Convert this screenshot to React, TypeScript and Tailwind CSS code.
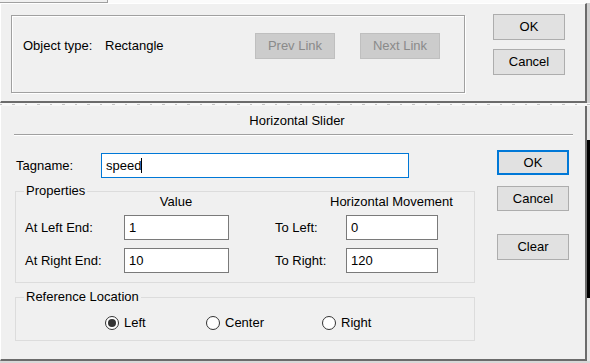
import type { ReactNode } from "react";

function Button({
  children,
  className = "",
  focused = false,
  disabled = false,
}: {
  children: ReactNode;
  className?: string;
  focused?: boolean;
  disabled?: boolean;
}) {
  return (
    <div
      className={`flex items-center justify-center ${
        disabled
          ? "bg-[#cccccc] border border-[#bfbfbf] text-[#8a8a8a]"
          : focused
          ? "bg-[#e1e1e1] border-2 border-[#0078d7] text-black"
          : "bg-[#e1e1e1] border border-[#adadad] text-black"
      } ${className}`}
    >
      {children}
    </div>
  );
}

function TextBox({ value, className = "", focused = false }: { value: string; className?: string; focused?: boolean }) {
  return (
    <div
      className={`h-[25px] bg-white border flex items-center pl-[4px] ${
        focused ? "border-[#0078d7]" : "border-[#7a7a7a]"
      } ${className}`}
    >
      <span>{value}</span>
      {focused && <span className="w-px h-[15px] bg-black" />}
    </div>
  );
}

function Radio({ label, checked = false, className = "" }: { label: string; checked?: boolean; className?: string }) {
  return (
    <div className={`flex items-center gap-[5px] ${className}`}>
      <div className="w-[14px] h-[14px] rounded-full border border-[#333333] bg-white flex items-center justify-center">
        {checked && <div className="w-[8px] h-[8px] rounded-full bg-[#333333]" />}
      </div>
      <span>{label}</span>
    </div>
  );
}

export default function App() {
  return (
    <div className="w-[590px] h-[363px] overflow-hidden bg-[#f0f0f0] text-[13px] leading-[16px] text-black font-['Liberation_Sans',Arial,sans-serif] flex flex-col">
      {/* strip above the first dialog */}
      <div className="h-[3px] flex bg-[#fbfbfb]">
        <div className="w-[108px] h-[3px] bg-[#f0f0f0] border-b border-r border-[#a0a0a0]" />
      </div>

      {/* Link dialog */}
      <div className="h-[100px] flex">
        <div className="w-[587px] h-[100px] flex border-t border-l border-white border-r-2 border-r-[#6b6b6b] border-b-2 border-b-[#6b6b6b]">
          <div className="ml-[10px] mt-[11px] w-[454px] h-[78px] border border-[#a0a0a0] shadow-[inset_1px_1px_0_#ffffff,1px_1px_0_#ffffff] pl-[11px] pt-[17px]">
            <div className="flex items-center h-[26px]">
              <span className="w-[82px]">Object type:</span>
              <span className="w-[150px]">Rectangle</span>
              <Button disabled className="w-[80px] h-[26px]">
                Prev Link
              </Button>
              <Button disabled className="ml-[25px] w-[80px] h-[26px]">
                Next Link
              </Button>
            </div>
          </div>
          <div className="ml-[28px] mt-[10px] flex flex-col gap-[9px]">
            <Button className="w-[72px] h-[26px]">OK</Button>
            <Button className="w-[72px] h-[26px]">Cancel</Button>
          </div>
        </div>
        <div className="w-[3px] bg-[#d0d0d0]" />
      </div>

      {/* gap between dialogs */}
      <div className="h-[3px] bg-[#f7f7f7] flex items-center">
        <div className="w-full h-px bg-[repeating-linear-gradient(90deg,#c4c4c4_0_2px,transparent_2px_12.5px)]" />
      </div>

      {/* Horizontal Slider dialog */}
      <div className="h-[255px] flex">
        <div className="w-[587px] h-[255px] border-l border-white border-r-2 border-r-[#6b6b6b] border-b-2 border-b-[#6b6b6b]">
          <div className="pt-[7px] text-center pl-[8px]">Horizontal Slider</div>
          <div className="ml-[13px] mt-[5px] w-[559px] h-[2px] border-t border-[#a0a0a0] border-b border-b-white" />

          <div className="flex">
            <div className="pl-[14px] w-[474px]">
              <div className="mt-[17px] flex items-center">
                <span className="pl-[1px] w-[86px]">Tagname:</span>
                <TextBox focused value="speed" className="w-[308px]" />
              </div>

              <fieldset className="mt-[5px] w-[460px] border border-[#dcdcdc] pb-[9px]">
                <legend className="ml-[8px] px-[2px]">Properties</legend>
                <div className="pl-[9px]">
                  <div className="-mt-[4px] flex leading-[14px]">
                    <span className="ml-[99px] w-[104px] text-center">Value</span>
                    <span className="ml-[102px] whitespace-nowrap">Horizontal Movement</span>
                  </div>
                  <div className="mt-[6px] flex items-center">
                    <span className="w-[99px]">At Left End:</span>
                    <TextBox value="1" className="w-[105px]" />
                    <span className="ml-[46px] w-[71px]">To Left:</span>
                    <TextBox value="0" className="w-[92px]" />
                  </div>
                  <div className="mt-[8px] flex items-center">
                    <span className="w-[99px]">At Right End:</span>
                    <TextBox value="10" className="w-[105px]" />
                    <span className="ml-[46px] w-[71px]">To Right:</span>
                    <TextBox value="120" className="w-[92px]" />
                  </div>
                </div>
              </fieldset>

              <fieldset className="mt-[6px] w-[460px] border border-[#dcdcdc] pb-[9px]">
                <legend className="ml-[8px] px-[2px]">Reference Location</legend>
                <div className="mt-[10px] flex items-center">
                  <Radio checked label="Left" className="ml-[89px] w-[101px]" />
                  <Radio label="Center" className="w-[116px]" />
                  <Radio label="Right" />
                </div>
              </fieldset>
            </div>

            <div className="ml-[22px] mt-[14px] flex flex-col">
              <Button focused className="w-[72px] h-[25px]">
                OK
              </Button>
              <Button className="mt-[11px] w-[72px] h-[25px]">Cancel</Button>
              <Button className="mt-[23px] w-[72px] h-[26px]">Clear</Button>
            </div>
          </div>
        </div>
        <div className="w-[3px] flex flex-col">
          <div className="h-[34px] bg-[#e8e8e8]" />
          <div className="h-[158px] bg-black" />
          <div className="flex-1 bg-[#e8e8e8]" />
        </div>
      </div>
      <div className="h-[2px] bg-[#d8d8d8]" />
    </div>
  );
}
